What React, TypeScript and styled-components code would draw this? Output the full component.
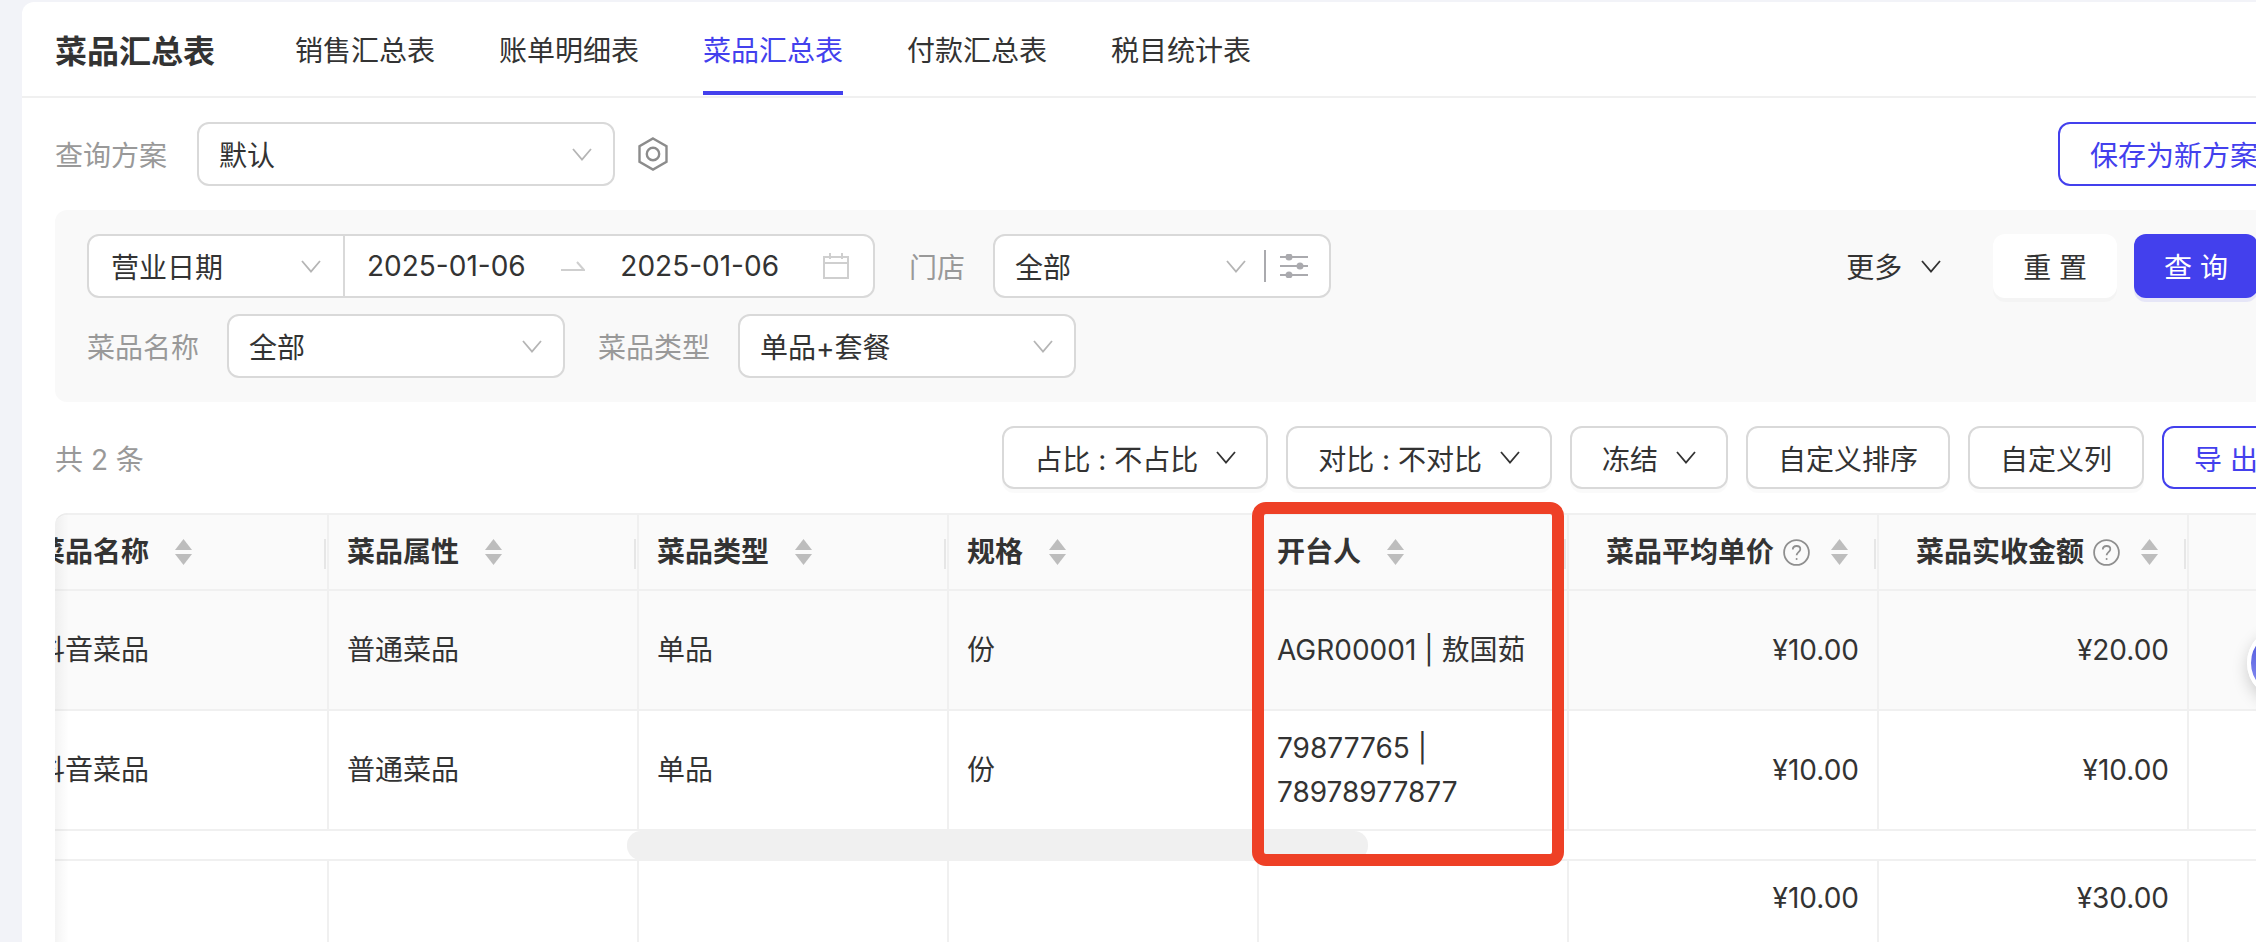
import React from "react";
import styled, { createGlobalStyle } from "styled-components";

const Global = createGlobalStyle`
  html, body { margin: 0; padding: 0; height: 942px; overflow: hidden; background: #f2f3f8; }
  body { font-family: Inter, "Noto Sans CJK SC", "Noto Sans", sans-serif; font-size: 28px; color: #333; }
  * { box-sizing: border-box; }
`;

const Card = styled.main`
  width: 2234px; height: 940px; margin: 2px 0 0 22px; background: #fff;
  border-top-left-radius: 12px; overflow: hidden;
`;
const Header = styled.header`
  display: flex; align-items: stretch; height: 96px; padding-left: 33px;
  border-bottom: 2px solid #f0f0f0;
`;
const Title = styled.h1`
  display: flex; align-items: center; margin: 0 80px 0 0; padding-top: 2px; padding-bottom: 2px;
  font-size: 32px; font-weight: 600; color: #333;
`;
const Tabs = styled.nav`display: flex; gap: 64px; height: 93px;`;
const Tab = styled.a<{ $active?: boolean }>`
  display: flex; align-items: center; padding-top: 5px; font-size: 28px;
  color: ${(p) => (p.$active ? "#4340ed" : "#333")};
  border-bottom: 4px solid ${(p) => (p.$active ? "#4340ed" : "transparent")};
`;
const Content = styled.div`
  width: 2235px; margin-left: 33px; padding-top: 24px;
`;
const Row = styled.div<{ $gap?: number }>`
  display: flex; align-items: center; height: 64px;
`;
const Label = styled.span<{ $mr?: number; $ml?: number }>`
  color: #999; font-size: 28px; white-space: nowrap;
  margin-right: ${(p) => p.$mr ?? 28}px; margin-left: ${(p) => p.$ml ?? 0}px;
`;
const Select = styled.div<{ $w: number }>`
  display: flex; align-items: center; justify-content: space-between; flex: none;
  width: ${(p) => p.$w}px; height: 64px; padding: 0 21px 0 20px; background: #fff;
  border: 2px solid #d9d9d9; border-radius: 12px; white-space: nowrap;
`;
const IconBtn = styled.span`display: inline-flex; margin-left: 23px;`;
const OutlineBtn = styled.button`
  height: 64px; padding: 0 30px; margin-left: auto; font: inherit; color: #4340ed; background: #fff;
  border: 2px solid #4340ed; border-radius: 12px; white-space: nowrap;
`;
const Panel = styled.section`
  display: flex; flex-direction: column; gap: 16px; margin-top: 24px; padding: 24px 32px;
  background: #f9f9f9; border-radius: 12px;
`;
const Range = styled.div`
  display: flex; align-items: stretch; flex: none; width: 788px; height: 64px; background: #fff;
  border: 2px solid #d9d9d9; border-radius: 12px;
`;
const RangeType = styled.div`
  display: flex; align-items: center; justify-content: space-between; width: 256px;
  padding: 0 22px 0 22px; border-right: 2px solid #d9d9d9;
`;
const RangeDates = styled.div`
  display: flex; align-items: center; flex: 1; padding: 0 24px 0 22px;
`;
const DateText = styled.span`letter-spacing: 0; white-space: nowrap;`;
const ArrowWrap = styled.span`display: inline-flex; flex: 1; justify-content: center;`;
const CalWrap = styled.span`display: inline-flex; margin-left: 44px;`;
const SelectRight = styled.span`display: flex; align-items: center;`;
const Divider = styled.i`display: block; width: 2px; height: 32px; background: #aaaaae; margin: 0 14px 0 18px;`;
const More = styled.span`display: flex; align-items: center; gap: 19px; margin-left: auto; margin-right: 52px; white-space: nowrap;`;
const ActionBtn = styled.button<{ $primary?: boolean }>`
  height: 64px; padding: 0 30px; font: inherit; border: 0; border-radius: 12px; white-space: nowrap;
  color: ${(p) => (p.$primary ? "#fff" : "#333")};
  background: ${(p) => (p.$primary ? "#4340ed" : "#fff")};
  box-shadow: 0 4px 0 ${(p) => (p.$primary ? "rgba(67,64,237,.1)" : "rgba(0,0,0,.02)")};
  margin-left: ${(p) => (p.$primary ? 17 : 0)}px;
`;
const Toolbar = styled.div`
  display: flex; align-items: center; gap: 18px; height: 63px; margin: 24px 0;
`;
const Total = styled.span`color: #999; margin-right: auto; white-space: nowrap;`;
const ToolBtn = styled.button<{ $accent?: boolean }>`
  display: flex; align-items: center; gap: 18px; height: 63px; padding: 0 30px; font: inherit; white-space: nowrap;
  color: ${(p) => (p.$accent ? "#4340ed" : "#333")}; background: #fff;
  border: 2px solid ${(p) => (p.$accent ? "#4340ed" : "#d9d9d9")}; border-radius: 12px;
  box-shadow: ${(p) => (p.$accent ? "none" : "0 4px 0 rgba(0,0,0,.02)")};
`;
const TableWrap = styled.div`position: relative;`;
const TableClip = styled.div`
  height: 429px; overflow: hidden; border-top: 2px solid #f0f0f0; border-top-left-radius: 12px;
  &::before {
    content: ""; position: absolute; left: 0; top: 0; bottom: 0; width: 14px; z-index: 2;
    border-top-left-radius: 12px;
    background: linear-gradient(90deg, rgba(0,0,0,.045), rgba(0,0,0,0));
  }
`;
const Track = styled.div`width: 2480px; margin-left: -36px;`;
const TRow = styled.div<{ $h: number; $bg?: string }>`
  display: grid; grid-template-columns: repeat(8, 310px); height: ${(p) => p.$h}px;
  background: ${(p) => p.$bg ?? "#fff"}; border-bottom: 2px solid #f0f0f0;
`;
const Cell = styled.div<{ $right?: boolean; $top?: boolean }>`
  display: flex; align-items: ${(p) => (p.$top ? "flex-start" : "center")};
  justify-content: ${(p) => (p.$right ? "flex-end" : "flex-start")};
  padding: ${(p) => (p.$top ? "18px" : "0")} 18px 0 18px; line-height: ${(p) => (p.$top ? "38px" : "44px")};
  border-right: 2px solid #f0f0f0; color: #333; word-break: break-word;
`;
const HeadCell = styled(Cell)`
  position: relative; font-weight: 600; white-space: nowrap;
  &::after {
    content: ""; position: absolute; right: 1px; top: 24px; height: 30px; width: 2px; background: #e6e6e6;
  }
`;
const SortWrap = styled.span<{ $right?: boolean }>`
  display: inline-flex; margin-left: ${(p) => (p.$right ? 21 : 26)}px; margin-right: ${(p) => (p.$right ? 11 : 0)}px;
`;
const HelpWrap = styled.span`display: inline-flex; margin-left: 9px;`;
const ScrollStrip = styled.div`
  height: 30px; border-bottom: 2px solid #f0f0f0; padding-left: 572px; background: #fff;
`;
const Thumb = styled.div`width: 741px; height: 29px; background: #f0f0f0; border-radius: 14px;`;
const Highlight = styled.div`
  position: absolute; left: 1197px; top: -11px; width: 312px; height: 364px; z-index: 3;
  border: 12px solid #ee4026; border-radius: 14px; pointer-events: none;
`;
const FloatBall = styled.div`
  position: fixed; left: 2247px; top: 627px; width: 72px; height: 72px; border-radius: 50%; z-index: 5;
  border: 4px solid #fff; background: linear-gradient(180deg, #4a52dc, #8d94f2);
  box-shadow: 0 6px 16px rgba(0,0,0,.18);
`;

const Chevron = ({ dark }: { dark?: boolean }) => (
  <svg width="20" height="13" viewBox="0 0 20 13" fill="none" stroke={dark ? "#333" : "#b5b5b5"} strokeWidth="1.8">
    <path d="M1 1l9 10.5L19 1" />
  </svg>
);
const Hex = () => (
  <svg width="30" height="34" viewBox="0 0 30 34" fill="none" stroke="#8c8c8c" strokeWidth="2.4">
    <path d="M15 1.5l13.5 7.75v15.5L15 32.5 1.5 24.75V9.25z" />
    <circle cx="15" cy="17" r="6.2" />
  </svg>
);
const HalfArrow = () => (
  <svg width="24" height="14" viewBox="0 0 24 14" fill="none" stroke="#cfcfcf" strokeWidth="2">
    <path d="M0 11h23L16 3" />
  </svg>
);
const Calendar = () => (
  <svg width="26" height="26" viewBox="0 0 26 26" fill="none" stroke="#cfcfcf" strokeWidth="2">
    <rect x="1" y="4" width="24" height="21" />
    <path d="M1 10h24M7 0v6M19 0v6" />
  </svg>
);
const Sliders = () => (
  <svg width="28" height="24" viewBox="0 0 28 24" fill="#aaaaae" stroke="#aaaaae" strokeWidth="2">
    <path d="M0 3h28M0 12h28M0 21h28" />
    <circle cx="9" cy="3" r="2.5" />
    <circle cx="20" cy="12" r="2.5" />
    <circle cx="9" cy="21" r="2.5" />
  </svg>
);
const Sorter = () => (
  <svg width="17" height="26" viewBox="0 0 17 26" fill="#bdbdbd">
    <path d="M8.5 0L17 11H0z" />
    <path d="M0 15h17L8.5 26z" />
  </svg>
);
const Help = () => (
  <svg width="27" height="27" viewBox="0 0 27 27" fill="none" stroke="#8f8f8f" strokeWidth="1.8">
    <circle cx="13.5" cy="13.5" r="12.4" />
    <path d="M9.8 10.6c0-2.2 1.7-3.6 3.8-3.6s3.7 1.4 3.7 3.3c0 2.8-3.7 2.9-3.7 6" />
    <circle cx="13.6" cy="20" r="1" fill="#8f8f8f" stroke="none" />
  </svg>
);

const heads: { t: string; right?: boolean; help?: boolean; sort?: boolean }[] = [
  { t: "菜品名称", sort: true },
  { t: "菜品属性", sort: true },
  { t: "菜品类型", sort: true },
  { t: "规格", sort: true },
  { t: "开台人", sort: true },
  { t: "菜品平均单价", right: true, help: true, sort: true },
  { t: "菜品实收金额", right: true, help: true, sort: true },
  { t: "" },
];
const rows = [
  { bg: "#fafafa", v: ["抖音菜品", "普通菜品", "单品", "份", "AGR00001 | 敖国茹", "¥10.00", "¥20.00", ""] },
  { bg: "#fff", v: ["抖音菜品", "普通菜品", "单品", "份", "79877765 | 78978977877", "¥10.00", "¥10.00", ""] },
];
const tabs = ["销售汇总表", "账单明细表", "菜品汇总表", "付款汇总表", "税目统计表"];
const tools = [
  { t: "占比 : 不占比", c: true },
  { t: "对比 : 不对比", c: true },
  { t: "冻结", c: true },
  { t: "自定义排序" },
  { t: "自定义列" },
];

export default function App() {
  return (
    <>
      <Global />
      <Card>
        <Header>
          <Title>菜品汇总表</Title>
          <Tabs>
            {tabs.map((t) => (
              <Tab key={t} $active={t === "菜品汇总表"}>{t}</Tab>
            ))}
          </Tabs>
        </Header>
        <Content>
          <Row>
            <Label $mr={30}>查询方案</Label>
            <Select $w={418}>默认<Chevron /></Select>
            <IconBtn><Hex /></IconBtn>
            <OutlineBtn>保存为新方案</OutlineBtn>
          </Row>
          <Panel>
            <Row>
              <Range>
                <RangeType>营业日期<Chevron /></RangeType>
                <RangeDates>
                  <DateText>2025-01-06</DateText>
                  <ArrowWrap><HalfArrow /></ArrowWrap>
                  <DateText>2025-01-06</DateText>
                  <CalWrap><Calendar /></CalWrap>
                </RangeDates>
              </Range>
              <Label $ml={34}>门店</Label>
              <Select $w={338}>
                全部
                <SelectRight>
                  <Chevron />
                  <Divider />
                  <Sliders />
                </SelectRight>
              </Select>
              <More>更多<Chevron dark /></More>
              <ActionBtn>重 置</ActionBtn>
              <ActionBtn $primary>查 询</ActionBtn>
            </Row>
            <Row>
              <Label>菜品名称</Label>
              <Select $w={338}>全部<Chevron /></Select>
              <Label $ml={33}>菜品类型</Label>
              <Select $w={338}>单品+套餐<Chevron /></Select>
            </Row>
          </Panel>
          <Toolbar>
            <Total>共 2 条</Total>
            {tools.map((b) => (
              <ToolBtn key={b.t}>{b.t}{b.c && <Chevron dark />}</ToolBtn>
            ))}
            <ToolBtn $accent>导 出</ToolBtn>
          </Toolbar>
          <TableWrap>
            <TableClip>
              <Track>
                <TRow $h={76} $bg="#fafafa">
                  {heads.map((h, i) => (
                    <HeadCell key={i} $right={h.right}>
                      {h.t}
                      {h.help && <HelpWrap><Help /></HelpWrap>}
                      {h.sort && <SortWrap $right={h.right}><Sorter /></SortWrap>}
                    </HeadCell>
                  ))}
                </TRow>
                {rows.map((r, ri) => (
                  <TRow key={ri} $h={120} $bg={r.bg}>
                    {r.v.map((v, i) => (
                      <Cell key={i} $right={heads[i].right}>{v}</Cell>
                    ))}
                  </TRow>
                ))}
              </Track>
              <ScrollStrip><Thumb /></ScrollStrip>
              <Track>
                <TRow $h={90}>
                  {heads.map((h, i) => (
                    <Cell key={i} $top $right={h.right}>
                      {i === 5 ? "¥10.00" : i === 6 ? "¥30.00" : ""}
                    </Cell>
                  ))}
                </TRow>
              </Track>
            </TableClip>
            <Highlight />
          </TableWrap>
        </Content>
      </Card>
      <FloatBall />
    </>
  );
}
